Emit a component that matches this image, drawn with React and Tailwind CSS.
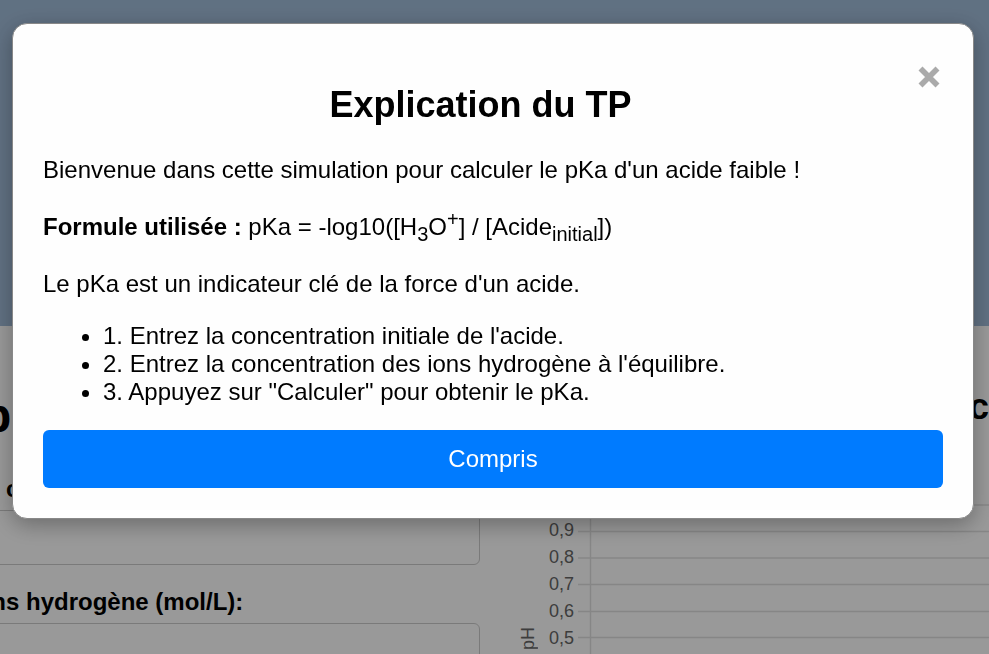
const ticks = ["0,9", "0,8", "0,7", "0,6", "0,5"];

function Form() {
  return (
    <form className="-ml-[30px] w-[510px] shrink-0 pt-[62px]">
      <h1 className="h-14 pl-3 text-[48px] leading-[56px] font-bold">p</h1>
      <label htmlFor="acid" className="mt-[31px] block pl-9 text-[24px] leading-7 font-bold">
        c
      </label>
      <input id="acid" className="mt-[7px] block h-[55px] w-full rounded-md border border-[#ccc]" />
      <label htmlFor="ions" className="mt-[23px] block text-[24px] leading-7 font-bold">
        ions hydrogène (mol/L):
      </label>
      <input id="ions" className="mt-[7px] block h-[55px] w-full rounded-md border border-[#ccc]" />
    </form>
  );
}

function Chart() {
  return (
    <section className="ml-9 flex min-w-0 grow flex-col pt-[60px]">
      <h2 className="self-end text-[36px] leading-[42px] font-bold">c</h2>
      <div className="mt-[63px] flex text-[18px] leading-[25px] text-[#666]">
        <div className="w-[25px] pt-[136px]">
          <span className="block rotate-180 [writing-mode:vertical-rl]">pH</span>
        </div>
        <ul className="ml-2 pt-[26px] leading-[27px]">
          {ticks.map((tick) => (
            <li key={tick}>{tick}</li>
          ))}
        </ul>
        <div className="ml-1 grow">
          <svg className="h-[200px] w-full" stroke="#e0e0e0" strokeWidth="1.5">
            <path d="M12.5 0V200" />
            {[14, 40.5, 67, 93.5, 120.5, 146.5].map((y) => (
              <line key={y} x1="0" x2="100%" y1={y} y2={y} />
            ))}
          </svg>
        </div>
      </div>
    </section>
  );
}

function Modal() {
  return (
    <div className="fixed inset-0 bg-black/40 pt-[23px] pr-[15px] pl-3">
      <div
        role="dialog"
        aria-labelledby="title"
        className="rounded-[15px] border border-[#888] bg-[#fefefe] p-[30px] pt-[29px] shadow-[0_6px_22px_rgba(0,0,0,0.3)]"
      >
        <div className="flex items-start">
          <h2 id="title" className="mt-[31px] grow text-center text-[36px] leading-[42px] font-bold">
            Explication du TP
          </h2>
          <button aria-label="Fermer" className="flex h-12 w-[25px] items-center text-[#aaa]">
            <svg className="h-[22px] w-[22px]" viewBox="0 0 22 22" stroke="currentColor" strokeWidth="5.6">
              <path d="M2.5 2.5 19.5 19.5M19.5 2.5 2.5 19.5" />
            </svg>
          </button>
        </div>
        <p className="mt-[30px]">Bienvenue dans cette simulation pour calculer le pKa d'un acide faible !</p>
        <p className="mt-5">
          <strong>Formule utilisée :</strong> pKa = -log10([H
          <sub className="static align-sub text-[20px] leading-normal">3</sub>O
          <sup className="static align-super text-[20px] leading-normal">+</sup>] / [Acide
          <sub className="static align-sub text-[20px] leading-normal">initial</sub>])
        </p>
        <p className="mt-[21px]">Le pKa est un indicateur clé de la force d'un acide.</p>
        <ul className="mt-6 list-disc pl-[60px]">
          <li>1. Entrez la concentration initiale de l'acide.</li>
          <li>2. Entrez la concentration des ions hydrogène à l'équilibre.</li>
          <li>3. Appuyez sur "Calculer" pour obtenir le pKa.</li>
        </ul>
        <button className="mt-6 h-[58px] w-full rounded-md bg-[#007bff] text-white">Compris</button>
      </div>
    </div>
  );
}

export default function App() {
  return (
    <div className="h-screen overflow-hidden bg-white font-['Liberation_Sans',Arial,sans-serif] text-[24px] leading-7 text-black">
      <header className="h-[326px] bg-[#a1bcd9]" />
      <main className="flex">
        <Form />
        <Chart />
      </main>
      <Modal />
    </div>
  );
}
